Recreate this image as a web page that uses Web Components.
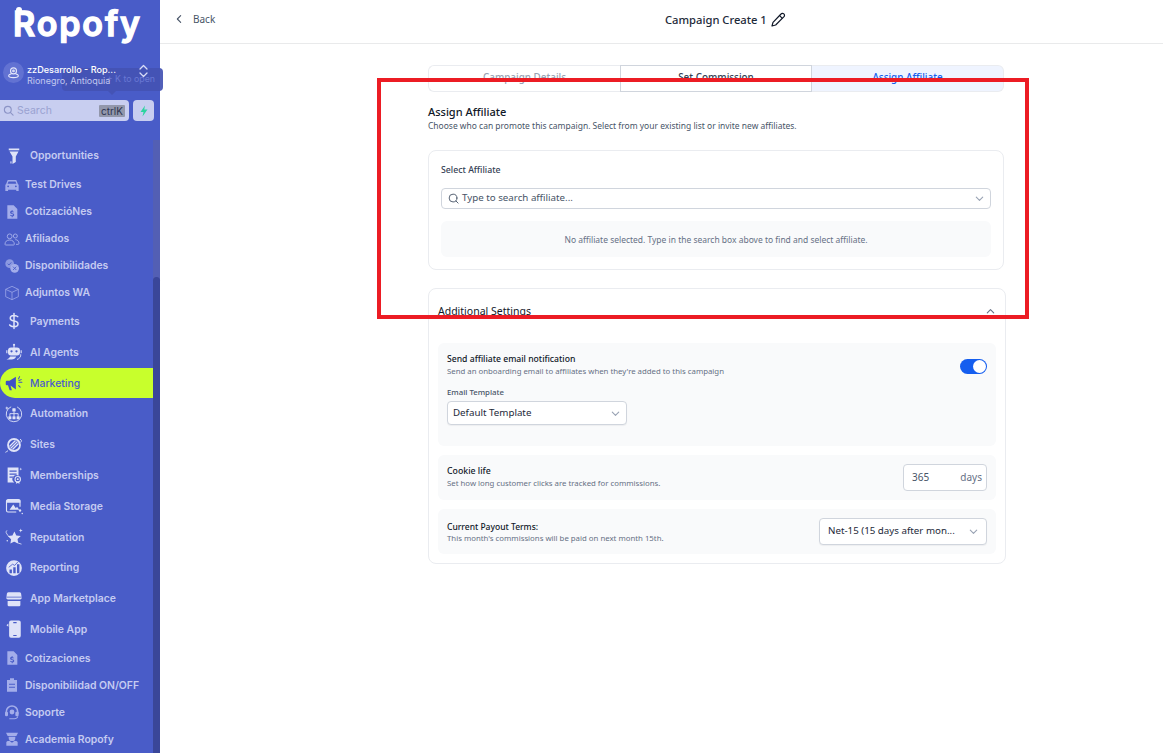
<!DOCTYPE html>
<html lang="en"><head><meta charset="utf-8"><title>Campaign Create</title>
<style>
html,body{margin:0;height:100%;background:#fff;overflow:hidden}
body{font-family:"Noto Sans","Liberation Sans",sans-serif}
</style></head><body>
<app-shell>
  <side-bar slot="side">
    <nav-item kind="native" icon="funnel">Opportunities</nav-item>
    <nav-item icon="car">Test Drives</nav-item>
    <nav-item icon="doc">CotizacióNes</nav-item>
    <nav-item icon="people">Afiliados</nav-item>
    <nav-item icon="avail">Disponibilidades</nav-item>
    <nav-item icon="box">Adjuntos WA</nav-item>
    <nav-item kind="native" icon="dollar">Payments</nav-item>
    <nav-item kind="native" icon="robot">AI Agents</nav-item>
    <nav-item kind="native" icon="mega" active>Marketing</nav-item>
    <nav-item kind="native" icon="auto">Automation</nav-item>
    <nav-item kind="native" icon="globe">Sites</nav-item>
    <nav-item kind="native" icon="member">Memberships</nav-item>
    <nav-item kind="native" icon="media">Media Storage</nav-item>
    <nav-item kind="native" icon="star">Reputation</nav-item>
    <nav-item kind="native" icon="report">Reporting</nav-item>
    <nav-item kind="native" icon="store">App Marketplace</nav-item>
    <nav-item kind="native" icon="phone">Mobile App</nav-item>
    <nav-item icon="doc">Cotizaciones</nav-item>
    <nav-item icon="clip">Disponibilidad ON/OFF</nav-item>
    <nav-item icon="head">Soporte</nav-item>
    <nav-item icon="cap">Academia Ropofy</nav-item>
  </side-bar>
  <top-bar slot="top"></top-bar>
  <step-tabs slot="main"></step-tabs>
  <section-head slot="main" heading="Assign Affiliate" sub="Choose who can promote this campaign. Select from your existing list or invite new affiliates."></section-head>
  <affiliate-card slot="main"></affiliate-card>
  <settings-card slot="main"></settings-card>
  <red-mark slot="over"></red-mark>
</app-shell>
<script>
const ICONS={
funnel:'<path fill="currentColor" d="M5 2h14v2.4H5zM6 6h12l-3.6 6.5V20l-4.4 2.6v-10z"/><path fill="currentColor" d="M7 19.5l1.3-1 .5 3-1.3.7z"/>',
car:'<path fill="currentColor" d="M5.6 4.5h12.8l2.6 6.3 1 1V21h-3.6v-2H6.1v2H2v-9.2l1-1zM6.8 6.6L5.4 10.3h13.2l-1.4-3.7zM6.2 12.6a1.4 1.4 0 100 2.8 1.4 1.4 0 000-2.8zm11.6 0a1.4 1.4 0 100 2.8 1.4 1.4 0 000-2.8z" fill-rule="evenodd"/>',
doc:'<path fill="currentColor" fill-rule="evenodd" d="M5 2h9.5L20 7.5V22H5zM11.6 9v1.3c-1.5.2-2.4 1.1-2.4 2.3 0 1.4 1 2 2.7 2.4 1.2.3 1.6.5 1.6 1 0 .5-.5.8-1.3.8-.9 0-1.6-.3-2.2-.8l-.9 1.3c.6.5 1.4.9 2.5 1V20h1.3v-1.3c1.5-.2 2.4-1.1 2.4-2.3 0-1.5-1-2.1-2.8-2.5-1.1-.3-1.5-.5-1.5-.9 0-.4.4-.7 1.1-.7.7 0 1.3.2 1.9.6l.8-1.3c-.6-.4-1.2-.7-2-.8V9z"/>',
people:'<g fill="none" stroke="currentColor" stroke-width="1.4"><circle cx="8.5" cy="8" r="3.6"/><circle cx="17" cy="7.5" r="3"/><path d="M1.5 20c0-4 2.6-6.5 7-6.5s7 2.5 7 6.5c0 .8-.6 1-1.2 1H2.700c-.6 0-1.200-.2-1.200-1z"/><path d="M17 13c3.300 0 5.500 2.200 5.500 5.500 0 1-.5 1.500-1.500 1.500h-3"/></g>',
avail:'<circle cx="8.500" cy="8.500" r="6.500" fill="currentColor" opacity=".75"/><circle cx="16" cy="15.500" r="6.500" fill="currentColor"/><path d="M5.500 8.500l2 2 3.500-4M13.500 13l5 5M18.500 13l-5 5" stroke="#495cc8" stroke-width="1.300" fill="none"/>',
box:'<path fill="none" stroke="currentColor" stroke-width="1.100" stroke-linejoin="round" d="M12 2l9.500 4.500v11L12 22l-9.500-4.500v-11zM2.500 6.500L12 11l9.500-4.500M12 11v11"/>',
dollar:'<path fill="none" stroke="currentColor" stroke-width="2" stroke-linecap="round" d="M12 2v20M17 6.200C16 4.900 14.300 4.500 11.700 4.500 8.700 4.500 7 6 7 8.200c0 2.500 2.200 3.300 5 3.800 3 .5 5.300 1.300 5.300 3.900 0 2.300-2 3.600-5.300 3.600-2.700 0-4.700-.7-5.800-2.200"/>',
robot:'<circle cx="12" cy="2.600" r="1.500" fill="currentColor"/><path fill="currentColor" fill-rule="evenodd" d="M11.300 4h1.400v2h3.300a4 4 0 014 4v2.500a4 4 0 01-4 4H8a4 4 0 01-4-4V10a4 4 0 014-4h3.300zM8.700 9.500a1.500 1.500 0 100 3 1.500 1.500 0 000-3zm6.600 0a1.500 1.500 0 100 3 1.500 1.500 0 000-3z"/><path fill="currentColor" d="M1.700 9.500h1.500v4H1.700zM20.800 9.500h1.500v4h-1.500zM7 18h8c-1 2.600-3.500 4-6 4H2c1.800-.6 3.800-2 5-4z"/><path fill="none" stroke="currentColor" stroke-width="1.200" d="M21 15c.6 3.400-2 6-5 7"/>',
mega:'<path fill="currentColor" d="M14.500 3.500L6 9H2.500A1.500 1.500 0 001 10.500v3A1.500 1.500 0 002.500 15H4l2.200 6.500h3L7.300 15.300l7.200 5.200z"/><g stroke="currentColor" stroke-width="1.400" stroke-linecap="round"><path d="M18 6.500l1.500-3M18.500 11h4M18.200 15.500l2 2M18.600 8.700l3-1.200"/></g>',
auto:'<g fill="none" stroke="currentColor" stroke-width="1.200"><path d="M8.200 2.400a10.300 10.300 0 108 .2"/><path d="M12 8.500v3M6.500 15v-3.500h11V15M12 11.500V15"/></g><g fill="currentColor"><rect x="9.800" y="4.300" width="4.400" height="4.400" rx=".8"/><rect x="4.500" y="15" width="4" height="4" rx=".8"/><rect x="10" y="15" width="4" height="4" rx=".8"/><rect x="15.500" y="15" width="4" height="4" rx=".8"/><path d="M2.500 1.500l.7 1.800 1.800.7-1.800.7-.7 1.800-.7-1.800L0 4l1.800-.7z"/></g>',
globe:'<circle cx="12" cy="12" r="8" fill="none" stroke="currentColor" stroke-width="2.400"/><path d="M7.500 16.500L16.500 7.500M10 18l8-8M6 14l8-8" stroke="currentColor" stroke-width="1.800"/><path fill="none" stroke="currentColor" stroke-width="1.300" d="M20 4.500c2.300.4 2.500 1.800 1 4M4 19.500c-1.800 1.600-3 1.800-3.500 2.400"/>',
member:'<path fill="currentColor" fill-rule="evenodd" d="M3.500 2H18v11a5 5 0 00-5.500 9h-9zM6 6v1.600h9.500V6zm0 4v1.600h9.500V10zm0 4v1.600h5V14z"/><circle cx="17" cy="17.500" r="3.600" fill="none" stroke="currentColor" stroke-width="1.400"/><circle cx="17" cy="17.500" r="1.300" fill="currentColor"/><path d="M15 21l-.5 2.500 2.500-1 2.500 1L19 21z" fill="currentColor"/><path d="M21 2l.5 1.500L23 4l-1.500.5L21 6l-.5-1.500L19 4l1.500-.5z" fill="currentColor"/>',
media:'<path fill="none" stroke="currentColor" stroke-width="1.500" d="M20 13V5.500A2 2 0 0018 3.500H4a2 2 0 00-2 2V18a2 2 0 002 2h11"/><path fill="currentColor" d="M2 4h18.500v3.500H2zM6 17l5-7 3.500 5 1.500-2 3 4z"/><circle cx="20" cy="18" r="1.600" fill="currentColor"/><circle cx="23" cy="22" r="1" fill="currentColor"/>',
star:'<path fill="currentColor" d="M12.500 4.500l2.600 5.400 5.900.8-4.300 4.100 1 5.900-5.200-2.800-5.300 2.800 1-5.900-4.300-4.100 6-.8z"/><path fill="none" stroke="currentColor" stroke-width="1.100" d="M1.500 6c2 4.800 10 13 20.500 15.500M3 3.500C1.800 3.800 1 4.800 1.500 6"/><path fill="currentColor" d="M21 .5l.7 2 2 .7-2 .7-.7 2-.7-2-2-.7 2-.7z"/><circle cx="3" cy="17" r="1" fill="currentColor"/>',
report:'<path fill="currentColor" fill-rule="evenodd" d="M12 1.500a10.500 10.500 0 110 21 10.500 10.500 0 010-21zM16 7v12h3.200V7zM11 11v8h3.200v-8zM6 14v5h3.200v-5z"/><path fill="none" stroke="#495cc8" stroke-width="1.100" d="M5 11l5-4 3 1.500L17 4"/>',
store:'<path fill="currentColor" d="M4.500 3h15a2 2 0 012 2l.8 6a3 3 0 01-3.300 1.700H5a3 3 0 01-3.300-1.700l.8-6a2 2 0 012-2zM3.500 14.500h17V20a1.800 1.800 0 01-1.800 1.800H5.300A1.800 1.800 0 013.500 20z"/><path stroke="#495cc8" stroke-width="1" d="M2 9.500h20"/><path stroke="#495cc8" stroke-width="1.400" d="M3.500 14h17"/>',
phone:'<path fill="currentColor" fill-rule="evenodd" d="M8 .5h10.500a2.500 2.500 0 012.500 2.500v18a2.500 2.500 0 01-2.500 2.500H8A2.500 2.500 0 015.500 21V3A2.500 2.500 0 018 .5zM11 2.800v1.400h4.500V2.800zM11 20v1.400h4.500V20z"/><path fill="currentColor" d="M4.500 4.500l-2.500 2.500 2.500 2z"/>',
clip:'<path fill="currentColor" fill-rule="evenodd" d="M9 2h6v2.500h4.500V22h-15V4.500H9zM7.500 10v1.800h9V10zm0 4.500v1.800h9v-1.800z"/>',
head:'<path fill="none" stroke="currentColor" stroke-width="2.400" d="M3.500 15v-3.500a8.500 8.500 0 0117 0V15"/><rect x="1.500" y="11.500" width="4.500" height="7" rx="2" fill="currentColor"/><rect x="17" y="11.500" width="5" height="7" rx="2" fill="currentColor"/><circle cx="12" cy="12" r="3.600" fill="currentColor"/><path fill="currentColor" d="M8 21.500h7.500c2.500 0 4-1 4.500-3l1.400.4C20.800 21.500 18.500 23 15.500 23H8z"/>',
cap:'<path fill="currentColor" d="M3 2.500h18l-2.500 5H5.500zM7 8.500h10v1.500a5 5 0 01-10 0zM3.500 16.500c1-1 2.800-1.500 4.500-1.700l4 2.700 4-2.700c1.700.2 3.500.7 4.500 1.700V22h-17z"/>'
};

function tpl(host,html){host.attachShadow({mode:'open'}).innerHTML=html;}
const CHEV='<svg width="11" height="11" viewBox="0 0 12 12" fill="none" stroke="#98a2b3" stroke-width="1.200" stroke-linecap="round" stroke-linejoin="round"><path d="M2.500 4.500L6 8l3.500-3.500"/></svg>';

customElements.define('app-shell',class extends HTMLElement{constructor(){super();tpl(this,`<style>
:host{display:flex;width:1163px;height:753px;overflow:hidden;position:relative;background:#fff}
.col{flex:1;min-width:0;display:flex;flex-direction:column}
.content{margin-left:268px;width:578px;padding-top:21px;display:flex;flex-direction:column}
</style><slot name="side"></slot><div class="col"><slot name="top"></slot><div class="content"><slot name="main"></slot></div></div><slot name="over"></slot>`);}});

customElements.define('ropofy-logo',class extends HTMLElement{constructor(){super();tpl(this,`<style>
:host{display:block;height:50px;position:relative;color:#fff}
.t{display:block;padding:2px 0 0 13px;font:600 34px/44px Inter,Lato,sans-serif;letter-spacing:1.900px;-webkit-text-stroke:1.300px #fff;white-space:nowrap}
.d{position:absolute;left:16px;top:7px;width:6px;height:6px;border-radius:50%;background:#fff}
</style><span class="d"></span><span class="t">Ropofy</span>`);}});

customElements.define('side-bar',class extends HTMLElement{constructor(){super();tpl(this,`<style>
:host{display:flex;flex-direction:column;width:160px;flex:none;height:753px;background:#495cc8;position:relative;font-family:Inter,"Liberation Sans",sans-serif;z-index:1}
.top{height:140px;flex:none;position:relative}
.loc{display:flex;align-items:center;margin-top:11px;height:22px;padding-left:3px;position:relative}
.av{width:21px;height:21px;border-radius:50%;background:#6272d2;display:flex;align-items:center;justify-content:center;color:#e4e7fa;flex:none;position:relative}
.txt{margin:5px 0 0 3px;position:relative;line-height:11px}
.a{font-size:9.100px;font-weight:500;color:#fff;white-space:nowrap}
.b{font-size:9px;color:#c2c8ef;white-space:nowrap}
.ud{position:absolute;left:137px;top:-1px;color:#d8dcf6}
.tip{position:absolute;left:62px;top:68px;width:101px;height:23px;background:#4453b4;opacity:.92;border-radius:4px;font-size:8.800px;color:#6d7bd6;line-height:22px;text-align:right;box-sizing:border-box;white-space:nowrap;padding-right:8px}
.tip:after{content:"";position:absolute;left:46px;bottom:-4px;border:4px solid transparent;border-bottom:0;border-top-color:#4453b4}
.search{display:flex;gap:4px;margin-top:17px;height:21px;width:154px}
.box{width:129px;background:#c8cef0;border-radius:0 4px 4px 0;display:flex;align-items:center;color:#9aa2d0;font-size:10.500px;box-sizing:border-box;padding-left:3px}
.box span{margin-left:3px;flex:1}
kbd{font:10px Inter,sans-serif;background:#9297ab;color:#2d3350;width:26px;height:12px;line-height:12px;text-align:center;margin-right:4px;border-radius:1px}
.bolt{width:21px;height:21px;background:#c8cef0;border-radius:4px;display:flex;align-items:center;justify-content:center}
.body{flex:1;min-height:0;display:flex}
.nav{width:153px;display:flex;flex-direction:column;overflow:hidden;padding-top:.3px}
.sb{width:7px;background:#535fb4;padding-top:137px;box-sizing:border-box}
.th{height:100%;background:#3a4699;border-radius:4px 4px 0 0}
</style>
<div class="tip">+ K to open</div>
<div class="top"><ropofy-logo></ropofy-logo>
<div class="loc"><div class="av"><svg width="13" height="13" viewBox="0 0 24 24" fill="none" stroke="currentColor" stroke-width="2"><circle cx="12" cy="9" r="5.500"/><circle cx="12" cy="9" r="1.500"/><path d="M8 14.500c-2.500.6-5 1.700-5 3.500 0 2 4 3.500 9 3.500s9-1.500 9-3.500c0-1.800-2.500-2.900-5-3.500"/></svg></div>
<div class="txt"><div class="a">zzDesarrollo - Rop...</div><div class="b">Rionegro, Antioquia</div></div>
<svg class="ud" width="13" height="22" viewBox="0 0 13 22" fill="none" stroke="currentColor" stroke-width="1.300" stroke-linecap="round" stroke-linejoin="round"><path d="M3 9L6.500 5.500 10 9M3 13l3.500 3.500L10 13"/></svg></div>
<div class="search"><div class="box"><svg width="11" height="11" viewBox="0 0 24 24" fill="none" stroke="#8c94c6" stroke-width="2.400" stroke-linecap="round"><circle cx="10.500" cy="10.500" r="7.500"/><path d="M16 16l6 6"/></svg><span>Search</span><kbd>ctrlK</kbd></div>
<div class="bolt"><svg width="10" height="12" viewBox="0 0 20 24"><path fill="#2dd4a0" d="M12 1L3 14h6l-2 9 10-14h-6.500z"/></svg></div></div></div>
<div class="body"><div class="nav"><slot></slot></div><div class="sb"><div class="th"></div></div></div>`);}});

customElements.define('nav-item',class extends HTMLElement{
constructor(){super();tpl(this,`<style>
:host{display:flex;align-items:center;flex:none;box-sizing:border-box;height:27px;padding-left:4px;gap:5px;color:#c5cbf1;font-size:10.400px;font-weight:600;white-space:nowrap}
:host([kind=native]){height:30.800px;padding-left:5px;gap:7px}
:host([active]){background:#c8ff2c;color:#4a5ccb;border-radius:16px 0 0 16px;font-weight:500}
svg{width:16px;height:16px;flex:none;display:block;color:#a3adea}
:host([kind=native]) svg{width:18px;height:18px;color:#dfe3f8}
:host([active]) svg{color:#3f4fc6}
</style><svg viewBox="0 0 24 24"></svg><slot></slot>`);}
connectedCallback(){this.shadowRoot.querySelector('svg').innerHTML=ICONS[this.getAttribute('icon')]||'';}
});

customElements.define('top-bar',class extends HTMLElement{constructor(){super();tpl(this,`<style>
:host{display:grid;grid-template-columns:505px auto;align-items:center;height:44px;box-sizing:border-box;border-bottom:1px solid #e9eaeb;flex:none;color:#101828}
.back{display:flex;align-items:center;font-size:10px;color:#475467;padding-left:14px;gap:9px;margin-top:-5px}
.t{display:flex;align-items:center;font-size:11.200px;font-weight:500;gap:3px;color:#1d2939;margin-top:-4px}
</style><div class="back"><svg width="10" height="10" viewBox="0 0 12 12" fill="none" stroke="#475467" stroke-width="1.300" stroke-linecap="round" stroke-linejoin="round"><path d="M8 2L4 6l4 4"/></svg><span>Back</span></div>
<div class="t"><span>Campaign Create 1</span><svg width="16" height="16" viewBox="0 0 24 24" fill="none" stroke="#101828" stroke-width="1.800" stroke-linejoin="round"><path d="M16.500 3a3 3 0 014.500 4L8.500 19.500 3 21l1.500-5.500z"/><path d="M14.500 5.500l4 4"/></svg></div>`);}});

customElements.define('step-tabs',class extends HTMLElement{constructor(){super();tpl(this,`<style>
:host{display:grid;grid-template-columns:repeat(3,1fr);height:27px;width:576px;flex:none;font-size:9.900px;font-weight:500;box-sizing:border-box}
div{display:flex;align-items:center;justify-content:center;box-sizing:border-box;border:1px solid #eaecf0;padding-bottom:3px}
.a{color:#98a2b3;border-radius:6px 0 0 6px;border-right:0}
.b{color:#344054;border-color:#d0d5dd}
.c{color:#155eef;background:#eff4ff;border-left:0;border-radius:0 6px 6px 0}
</style><div class="a">Campaign Details</div><div class="b">Set Commission</div><div class="c">Assign Affiliate</div>`);}});

customElements.define('section-head',class extends HTMLElement{constructor(){super();tpl(this,`<style>
:host{display:block;margin-top:12px;height:46px;flex:none}
h2{margin:0;font-size:11px;line-height:15px;font-weight:500;color:#101828}
p{margin:0;font-size:8.470px;line-height:13px;color:#475467;white-space:nowrap}
</style><h2></h2><p></p>`);}
connectedCallback(){this.shadowRoot.querySelector('h2').textContent=this.getAttribute('heading');this.shadowRoot.querySelector('p').textContent=this.getAttribute('sub');}
});

customElements.define('affiliate-card',class extends HTMLElement{constructor(){super();tpl(this,`<style>
:host{display:block;width:576px;height:120px;box-sizing:border-box;border:1px solid #eaecf0;border-radius:8px;padding:12px 12px 0;flex:none}
.l{font-size:8.750px;font-weight:500;color:#344054;line-height:14px}
.i{margin-top:11px;height:21px;box-sizing:border-box;border:1px solid #d0d5dd;border-radius:4px;display:flex;align-items:center;padding:0 5px 0 6px;font-size:9.750px;color:#475467}
.i span{flex:1;margin:-2px 0 0 3px}
.e{margin-top:12px;height:36px;background:#f9fafb;border-radius:6px;display:flex;align-items:center;justify-content:center;font-size:8.470px;color:#667085;box-sizing:border-box}
</style><div class="l">Select Affiliate</div>
<div class="i"><svg width="11" height="11" viewBox="0 0 24 24" fill="none" stroke="#475467" stroke-width="2" stroke-linecap="round"><circle cx="11" cy="11" r="8.500"/><path d="M17.500 17.500L22 22"/></svg><span>Type to search affiliate...</span>${CHEV}</div>
<div class="e">No affiliate selected. Type in the search box above to find and select affiliate.</div>`);}});

customElements.define('setting-row',class extends HTMLElement{constructor(){super();tpl(this,`<style>
:host{display:flex;align-items:center;justify-content:space-between;background:#f9fafb;border-radius:6px;box-sizing:border-box;padding:0 9px;height:45px;flex:none}
b{display:block;font-size:var(--lbl,8.750px);line-height:13px;font-weight:500;color:#101828}
small{display:block;font-size:7.800px;line-height:11px;color:#667085;white-space:nowrap}
.tx{padding-bottom:var(--pb,0)}
</style><div class="tx"><b></b><small></small></div><slot></slot>`);}
connectedCallback(){const s=this.shadowRoot;s.querySelector('b').textContent=this.getAttribute('label');s.querySelector('small').textContent=this.getAttribute('sub');}
});

customElements.define('select-box',class extends HTMLElement{constructor(){super();tpl(this,`<style>
:host{display:flex;align-items:center;box-sizing:border-box;background:#fff;border:1px solid #d0d5dd;border-radius:4px;box-shadow:0 1px 1px rgba(16,24,40,.05);font-size:9.750px;color:#1d2939;padding:0 8px 0 5px;justify-content:space-between;white-space:nowrap}
span{padding-bottom:2px}
</style><span><slot></slot></span>${CHEV}`);}});

customElements.define('settings-card',class extends HTMLElement{constructor(){super();tpl(this,`<style>
:host{display:block;width:578px;height:276px;margin-top:18px;box-sizing:border-box;border:1px solid #eaecf0;border-radius:8px;padding:0 9px;flex:none}
.h{display:flex;justify-content:space-between;align-items:center;height:44px;font-size:10.500px;font-weight:400;color:#101828;box-sizing:border-box}
.rows{margin-top:10px;display:flex;flex-direction:column;gap:9px}
.first{background:#f9fafb;border-radius:6px;height:103px;box-sizing:border-box;padding:10px 9px 0;position:relative}
.tr{display:flex;justify-content:space-between;align-items:flex-start}
b{display:block;font-size:8.650px;line-height:13px;font-weight:500;color:#101828}
small{display:block;font-size:7.800px;line-height:11px;color:#667085;white-space:nowrap}
.sw{width:27px;height:15px;border-radius:8px;background:#155eef;display:flex;justify-content:flex-end;align-items:center;padding:0 1px;box-sizing:border-box;margin-top:6px}
.sw i{width:13px;height:13px;background:#fff;border-radius:50%}
.et{font-size:7.800px;font-weight:500;color:#475467;line-height:12px;margin-top:9px}
.dt{width:180px;height:24px;margin-top:3px;padding-right:5px}
.days{width:84px;height:27px;background:#fff;border:1px solid #d0d5dd;border-radius:4px;box-sizing:border-box;display:flex;justify-content:space-between;align-items:center;font-size:10px;color:#475467;padding:0 4px 2px 8px}
.days span:last-child{color:#667085}
.net{width:168px;height:27px;padding-left:8px;padding-right:7px}
</style>
<div class="h"><span>Additional Settings</span><svg width="11" height="11" viewBox="0 0 12 12" fill="none" stroke="#667085" stroke-width="1.200" stroke-linecap="round" stroke-linejoin="round"><path d="M2.500 7.500L6 4l3.500 3.500"/></svg></div>
<div class="rows">
<div class="first"><div class="tr"><div><b>Send affiliate email notification</b><small>Send an onboarding email to affiliates when they're added to this campaign</small></div><div class="sw"><i></i></div></div>
<div class="et">Email Template</div><select-box class="dt">Default Template</select-box></div>
<setting-row style="--pb:2px" label="Cookie life" sub="Set how long customer clicks are tracked for commissions."><div class="days"><span>365</span><span>days</span></div></setting-row>
<setting-row style="--lbl:8.500px" label="Current Payout Terms:" sub="This month's commissions will be paid on next month 15th."><select-box class="net">Net-15 (15 days after mon...</select-box></setting-row>
</div>`);}});

customElements.define('red-mark',class extends HTMLElement{constructor(){super();tpl(this,`<style>
:host{position:absolute;left:377px;top:78px;width:652px;height:241px;box-sizing:border-box;border:4px solid #ec1c24;pointer-events:none;z-index:2}
</style>`);}});
</script>
</body></html>
